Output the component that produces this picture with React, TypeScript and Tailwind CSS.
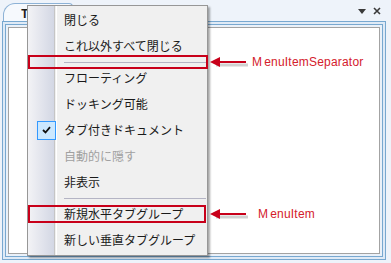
import React from 'react';

const items: { label: string; sep?: boolean; checked?: boolean; disabled?: boolean }[] = [
  { label: '閉じる' },
  { label: 'これ以外すべて閉じる' },
  { label: '', sep: true },
  { label: 'フローティング' },
  { label: 'ドッキング可能' },
  { label: 'タブ付きドキュメント', checked: true },
  { label: '自動的に隠す', disabled: true },
  { label: '非表示' },
  { label: '', sep: true },
  { label: '新規水平タブグループ' },
  { label: '新しい垂直タブグループ' },
];

const Arrow: React.FC<{ className: string }> = ({ className }) => (
  <svg className={className} width="40" height="14" viewBox="0 0 40 14">
    <line x1="6" y1="9" x2="38" y2="9" stroke="#000" strokeOpacity="0.18" strokeWidth="3" />
    <line x1="6" y1="6" x2="36" y2="6" stroke="#c8001a" strokeWidth="2" />
    <polygon points="0,6 10,1 10,11" fill="#c8001a" />
  </svg>
);

const App: React.FC = () => {
  return (
    <div className="relative w-[391px] h-[263px] overflow-hidden bg-[#eef3fa] font-['Noto_Sans_CJK_JP','Noto_Sans',sans-serif]">
      {/* Tab strip */}
      <div className="flex items-end h-[21px] pl-[3px]">
        <div className="w-[70px] h-[18px] rounded-tl-[12px] rounded-tr-[4px] border border-b-0 border-[#8db2d6] bg-[#f6f9fd] pl-[17px] text-[12px] font-bold leading-[17px] text-[#1e1e1e]">
          T
        </div>
        <div className="ml-[3px] w-[60px] h-[16px] rounded-t-[4px] border border-b-0 border-[#a9c3dc] bg-[#e8eef6]" />
        <div className="flex-1" />
        <div className="flex items-center gap-[7px] pr-[10px] pb-[6px]">
          <svg width="8" height="5" viewBox="0 0 8 5"><polygon points="0,0 8,0 4,5" fill="#3a3a3a" /></svg>
          <svg width="8" height="8" viewBox="0 0 8 8"><path d="M1 1 L7 7 M7 1 L1 7" stroke="#3a3a3a" strokeWidth="1.6" /></svg>
        </div>
      </div>

      {/* Panel frame */}
      <div className="ml-[2px] w-[384px] h-[239px] border border-[#78a8d0] bg-[#dfeaf6] p-[2px]">
        <div className="w-full h-full border border-[#78a8d0] bg-[#eaf1f9] p-[2px]">
          <div className="w-full h-full border border-[#a3a3a3] bg-white" />
        </div>
      </div>

      {/* Context menu */}
      <div className="absolute left-[27px] top-[5px] w-[181px] h-[251px] border border-[#979797] bg-[#f0f0f0] py-[1px] shadow-[2px_2px_2px_rgba(0,0,0,0.35)]">
        <div className="absolute left-0 top-0 bottom-0 w-[27px] bg-gradient-to-r from-[#f3f3f6] to-[#d3d7e4] border-r border-[#c5c5c5]" />
        <div className="absolute left-[28px] top-0 bottom-0 w-px bg-white" />
        <div className="relative flex flex-col">
          {items.map((it, i) =>
            it.sep ? (
              <div key={i} className="h-[6px] flex items-center pl-[36px] pr-[1px]">
                <div className="w-full h-px bg-[#b4b4c4]" />
              </div>
            ) : (
              <div key={i} className="h-[26px] flex items-center text-[12px]">
                <div className="w-[36px] flex justify-center">
                  {it.checked && (
                    <div className="w-[19px] h-[19px] border border-[#3399ff] bg-[#cce8ff] flex items-center justify-center">
                      <svg width="9" height="8" viewBox="0 0 9 8">
                        <path d="M1 4 L3.5 6.5 L8 1.2" stroke="#111" strokeWidth="1.8" fill="none" />
                      </svg>
                    </div>
                  )}
                </div>
                <span className={it.disabled ? 'text-[#a0a0a0]' : 'text-[#1a1a1a]'}>{it.label}</span>
              </div>
            )
          )}
        </div>
      </div>

      {/* Annotation boxes */}
      <div className="absolute left-[28px] top-[55px] w-[180px] h-[14px] border-2 border-[#c8001a]" />
      <div className="absolute left-[28px] top-[205px] w-[178px] h-[18px] border-2 border-[#c8001a]" />

      <Arrow className="absolute left-[210px] top-[56px]" />
      <Arrow className="absolute left-[210px] top-[208px]" />

      <div className="absolute left-[252px] top-[54px] text-[12px] leading-[16px] tracking-[0.2px] text-[#d4202c] font-['Liberation_Sans',Arial,sans-serif]">
        <span className="mr-[2px]">M</span>enuItemSeparator
      </div>
      <div className="absolute left-[258px] top-[206px] text-[12px] leading-[16px] tracking-[0.2px] text-[#d4202c] font-['Liberation_Sans',Arial,sans-serif]">
        <span className="mr-[2px]">M</span>enuItem
      </div>
    </div>
  );
};

export default App;
